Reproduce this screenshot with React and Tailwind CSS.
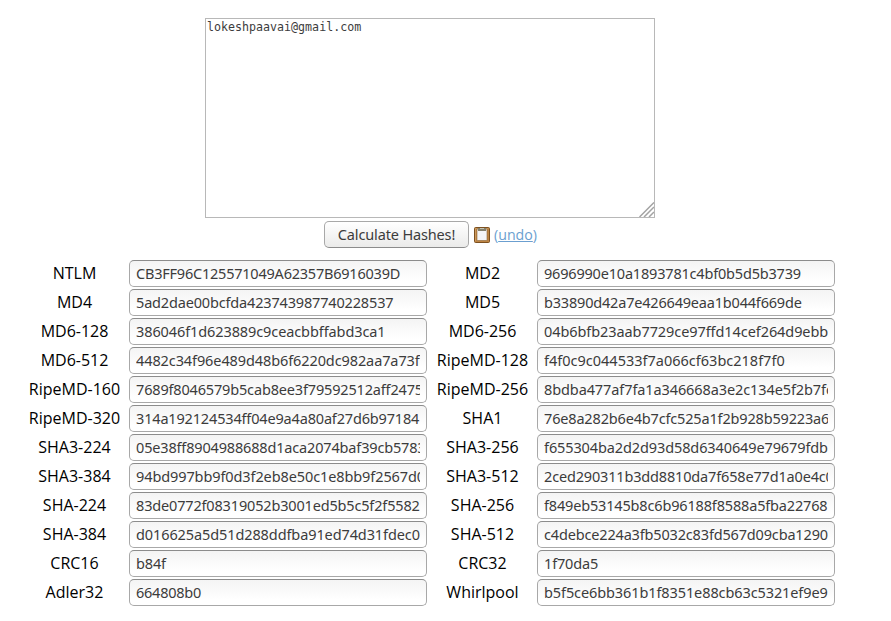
import { useState } from 'react';

const SAMPLE_TEXT = 'lokeshpaavai@gmail.com';

const HASH_ROWS = [
  [
    { name: 'NTLM', value: 'CB3FF96C125571049A62357B6916039D', tracking: 'tracking-[-0.22px]' },
    { name: 'MD2', value: '9696990e10a1893781c4bf0b5d5b3739', tracking: 'tracking-[-0.19px]' },
  ],
  [
    { name: 'MD4', value: '5ad2dae00bcfda423743987740228537' },
    { name: 'MD5', value: 'b33890d42a7e426649eaa1b044f669de', tracking: 'tracking-[-0.19px]' },
  ],
  [
    { name: 'MD6-128', value: '386046f1d623889c9ceacbbffabd3ca1', tracking: 'tracking-[-0.1px]' },
    { name: 'MD6-256', value: '04b6bfb23aab7729ce97ffd14cef264d9ebb', tracking: 'tracking-[-0.08px]' },
  ],
  [
    { name: 'MD6-512', value: '4482c34f96e489d48b6f6220dc982aa7a73fa', tracking: 'tracking-[-0.1px]' },
    { name: 'RipeMD-128', value: 'f4f0c9c044533f7a066cf63bc218f7f0', tracking: 'tracking-normal' },
  ],
  [
    { name: 'RipeMD-160', value: '7689f8046579b5cab8ee3f79592512aff2475' },
    { name: 'RipeMD-256', value: '8bdba477af7fa1a346668a3e2c134e5f2b7fc', tracking: 'tracking-[-0.1px]' },
  ],
  [
    { name: 'RipeMD-320', value: '314a192124534ff04e9a4a80af27d6b97184' },
    { name: 'SHA1', value: '76e8a282b6e4b7cfc525a1f2b928b59223a6' },
  ],
  [
    { name: 'SHA3-224', value: '05e38ff8904988688d1aca2074baf39cb5783' },
    { name: 'SHA3-256', value: 'f655304ba2d2d93d58d6340649e79679fdb9', tracking: 'tracking-[-0.11px]' },
  ],
  [
    { name: 'SHA3-384', value: '94bd997bb9f0d3f2eb8e50c1e8bb9f2567d0', tracking: 'tracking-[-0.1px]' },
    { name: 'SHA3-512', value: '2ced290311b3dd8810da7f658e77d1a0e4c0' },
  ],
  [
    { name: 'SHA-224', value: '83de0772f08319052b3001ed5b5c5f2f5582' },
    { name: 'SHA-256', value: 'f849eb53145b8c6b96188f8588a5fba22768' },
  ],
  [
    { name: 'SHA-384', value: 'd016625a5d51d288ddfba91ed74d31fdec0', tracking: 'tracking-[-0.1px]' },
    { name: 'SHA-512', value: 'c4debce224a3fb5032c83fd567d09cba1290' },
  ],
  [
    { name: 'CRC16', value: 'b84f' },
    { name: 'CRC32', value: '1f70da5' },
  ],
  [
    { name: 'Adler32', value: '664808b0', tracking: 'tracking-[-0.24px]' },
    { name: 'Whirlpool', value: 'b5f5ce6bb361b1f8351e88cb63c5321ef9e9', tracking: 'tracking-[-0.1px]' },
  ],
];

const ClipboardIcon = () => (
  <svg width="16" height="16" viewBox="0 0 16 16" aria-hidden>
    <rect x="0.5" y="0.5" width="15" height="15" rx="1" fill="#bd8443" stroke="#7d501f" />
    <path d="M1.5 14V1.5H14" fill="none" stroke="#cc9a5e" />
    <rect x="3" y="2" width="10" height="11.5" fill="#f5f5f7" stroke="#8d6436" strokeWidth="0.6" />
    <path d="M4 1h8v3H4z" fill="#85806c" />
    <path d="M6 1.5h4" stroke="#c4c4b4" />
  </svg>
);

const ResizeGrip = () => (
  <svg
    width="15"
    height="15"
    viewBox="0 0 15 15"
    className="pointer-events-none absolute right-px bottom-px"
    aria-hidden
  >
    <path d="M0.5 15L15 0.5M5 15L15 5M10 15L15 10" stroke="#a3a3a3" strokeWidth="1.5" />
  </svg>
);

const HashField = ({ name, value, tracking = 'tracking-[-0.165px]' }) => (
  <>
    <label
      htmlFor={name}
      className="text-center text-[16px] leading-[26px] text-black nth-[4n+3]:pl-px"
    >
      {name}
    </label>
    <input
      id={name}
      readOnly
      value={value}
      className={`h-[27px] w-full rounded-[5px] border border-[#a8a8a8] border-t-[#8c8c8c] bg-linear-to-b from-[#f4f4f4] to-white to-80% px-1.5 pb-0.5 font-['Noto_Sans',sans-serif] text-[14.5px] text-[#3c3c3c] outline-none ${tracking}`}
    />
  </>
);

export default function App() {
  const [text, setText] = useState(SAMPLE_TEXT);

  return (
    <main className="h-[621px] w-[891px] overflow-hidden bg-white pt-[18px] font-['Open_Sans','Noto_Sans',sans-serif]">
      <div className="relative ml-[205px] h-[200px] w-[450px]">
        <textarea
          value={text}
          onChange={(e) => setText(e.target.value)}
          spellCheck={false}
          className="block size-full resize-none border border-[#b8b8b8] px-px py-0.5 font-['DejaVu_Sans_Mono',monospace] text-[11.65px] leading-[13px] text-[#3c3c3c] outline-none"
        />
        <ResizeGrip />
      </div>

      <div className="mt-[3px] ml-[324px] flex h-[27px] items-center">
        <button
          type="button"
          className="h-[27px] w-[145px] rounded-[5px] border border-[#a8a8a8] border-b-[#8c8c8c] bg-linear-to-b from-white to-[#ebebea] font-['Noto_Sans',sans-serif] text-[14.5px] leading-[25px] tracking-[-0.15px] whitespace-nowrap text-[#3c3c3c]"
        >
          Calculate Hashes!
        </button>
        <span className="ml-[5px]">
          <ClipboardIcon />
        </span>
        <span className="ml-1 text-[14.2px] text-[#6b9fd0]">
          (
          <button type="button" className="underline" onClick={() => setText(SAMPLE_TEXT)}>
            undo
          </button>
          )
        </span>
      </div>

      <div className="mt-3 ml-5 grid grid-cols-[109px_298px_110px_298px] gap-y-0.5">
        {HASH_ROWS.flat().map((hash) => (
          <HashField key={hash.name} {...hash} />
        ))}
      </div>
    </main>
  );
}
